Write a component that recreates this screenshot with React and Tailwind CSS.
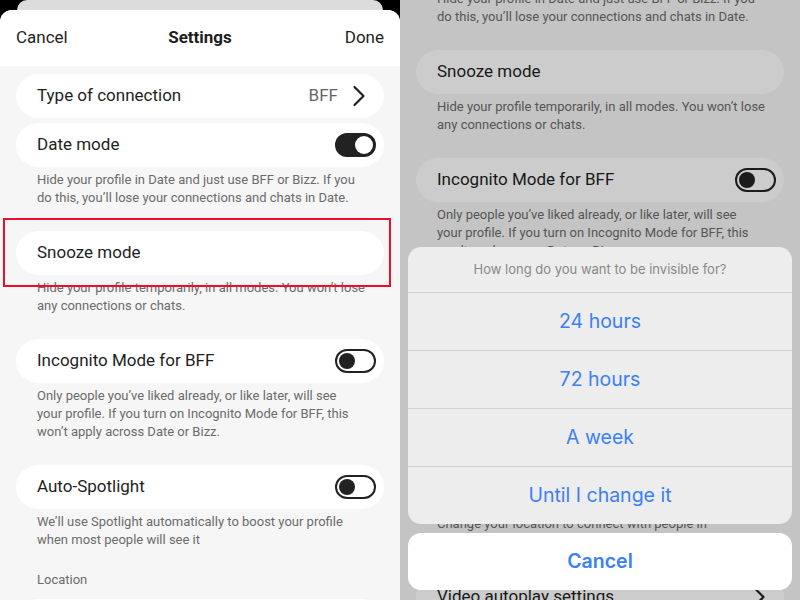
import React from "react";

const FONT = { fontFamily: "Roboto, 'Noto Sans', sans-serif" };
const IOS = { fontFamily: "Inter, Roboto, sans-serif" };

function Chevron() {
  return (
    <svg width="14" height="22" viewBox="0 0 14 22" fill="none">
      <path d="M2.5 2 L11.5 11 L2.5 20" stroke="#222" strokeWidth="2.2" strokeLinecap="round" strokeLinejoin="round" />
    </svg>
  );
}

function Toggle({ on }) {
  if (on) {
    return (
      <div className="w-[41px] h-[24px] rounded-full bg-[#222] flex items-center justify-end pr-[3px]">
        <div className="w-[18px] h-[18px] rounded-full bg-white" />
      </div>
    );
  }
  return (
    <div className="w-[41px] h-[24px] rounded-full bg-white border-[2.5px] border-[#222] flex items-center pl-[2px]">
      <div className="w-[16px] h-[16px] rounded-full bg-[#222]" />
    </div>
  );
}

function Card({ title, right }) {
  return (
    <div className="h-[44px] rounded-full bg-white flex items-center justify-between pl-[21px] pr-[8px]">
      <span className="text-[17px] text-[#1e1e1e]">{title}</span>
      {right}
    </div>
  );
}

function Desc({ lines }) {
  return (
    <div className="mt-[4px] pl-[21px] text-[13px] leading-[18px] text-[#6b6b6b]">
      {lines.map((l, i) => (
        <div key={i} className="whitespace-nowrap">{l}</div>
      ))}
    </div>
  );
}

function SettingsList() {
  return (
    <div className="px-4 pt-[8px] flex flex-col" style={FONT}>
      <Card
        title="Type of connection"
        right={
          <div className="flex items-center gap-[14px] pr-[10px]">
            <span className="text-[17px] text-[#666]">BFF</span>
            <Chevron />
          </div>
        }
      />
      <div className="mt-[5px]">
        <Card title="Date mode" right={<Toggle on />} />
        <Desc lines={["Hide your profile in Date and just use BFF or Bizz. If you", "do this, you\u2019ll lose your connections and chats in Date."]} />
      </div>
      <div className="mt-[24px]">
        <Card title="Snooze mode" right={null} />
        <Desc lines={["Hide your profile temporarily, in all modes. You won\u2019t lose", "any connections or chats."]} />
      </div>
      <div className="mt-[24px]">
        <Card title="Incognito Mode for BFF" right={<Toggle on={false} />} />
        <Desc lines={["Only people you\u2019ve liked already, or like later, will see", "your profile. If you turn on Incognito Mode for BFF, this", "won\u2019t apply across Date or Bizz."]} />
      </div>
      <div className="mt-[24px]">
        <Card title="Auto-Spotlight" right={<Toggle on={false} />} />
        <Desc lines={["We\u2019ll use Spotlight automatically to boost your profile", "when most people will see it"]} />
      </div>
      <div className="mt-[22px] pl-[21px] text-[13px] leading-[18px] text-[#6b6b6b]">Location</div>
      <div className="mt-[10px]">
        <Card title="Current location" right={null} />
      </div>
      <div className="mt-[5px]">
        <Card title="Travel" right={null} />
        <Desc lines={["Change your location to connect with people in", "other cities."]} />
      </div>
      <div className="mt-[24px]">
        <Card title="Video autoplay settings" right={<div className="pr-[10px]"><Chevron /></div>} />
      </div>
      <div className="h-[200px]" />
    </div>
  );
}

function LeftPanel() {
  return (
    <div className="w-[400px] h-[600px] bg-black flex flex-col overflow-hidden">
      <div className="h-[12px] mx-[17px] bg-[#dcdcdc] rounded-t-[10px] shrink-0" />
      <div className="mt-[-2px] flex-1 bg-[#f6f6f6] rounded-t-[12px] overflow-hidden flex flex-col relative">
        <div className="h-[56px] bg-white grid grid-cols-3 items-center px-4 shrink-0 text-[17px] text-[#1e1e1e]" style={FONT}>
          <span>Cancel</span>
          <span className="font-bold text-center">Settings</span>
          <span className="text-right">Done</span>
        </div>
        <div className="relative">
          <SettingsList />
          <div className="absolute left-[3px] top-[152px] w-[388px] h-[69px] border-2 border-[#ec0f2c]" />
        </div>
      </div>
    </div>
  );
}

function RightPanel() {
  const items = ["24 hours", "72 hours", "A week", "Until I change it"];
  return (
    <div className="w-[400px] h-[600px] bg-[#f6f6f6] overflow-hidden relative">
      <div className="mt-[-115px]">
        <SettingsList />
      </div>
      <div className="absolute inset-0 bg-black/20" />
      <div className="absolute left-[8px] right-[8px] bottom-[10px] flex flex-col gap-[9px]" style={IOS}>
        <div className="rounded-[13px] bg-[#ededed] overflow-hidden flex flex-col">
          <div className="h-[45px] flex items-center justify-center text-[13px] text-[#888]">
            How long do you want to be invisible for?
          </div>
          {items.map((t) => (
            <div key={t} className="h-[58px] border-t border-[#d2d2d2] flex items-center justify-center text-[19.5px] text-[#3b80f5]">
              {t}
            </div>
          ))}
        </div>
        <div className="h-[57px] rounded-[13px] bg-white flex items-center justify-center text-[19.5px] font-semibold text-[#3b80f5]">
          Cancel
        </div>
      </div>
    </div>
  );
}

export default function App() {
  return (
    <div className="w-[800px] h-[600px] flex overflow-hidden">
      <LeftPanel />
      <RightPanel />
    </div>
  );
}
